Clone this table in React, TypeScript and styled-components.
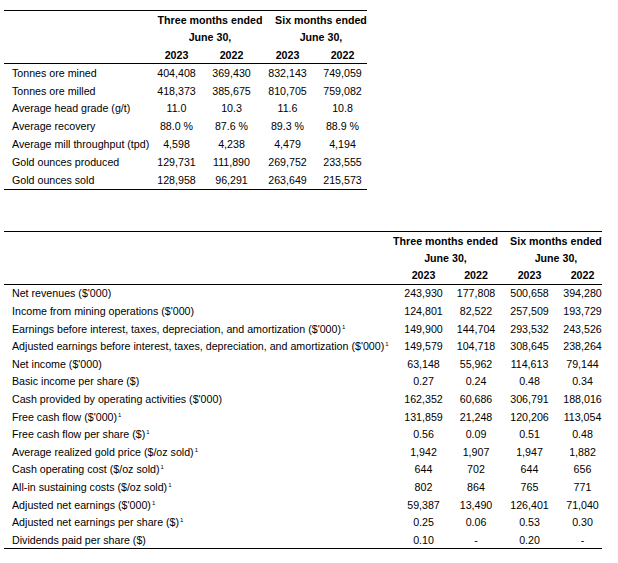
import React from "react";
import styled, { createGlobalStyle } from "styled-components";

const GlobalStyle = createGlobalStyle`
  html, body { margin: 0; padding: 0; background: #fff; }
  body {
    font-family: "Liberation Sans", Arial, sans-serif;
    font-size: 10.67px;
    color: #000;
  }
`;

const Page = styled.div`
  display: flex;
  flex-direction: column;
  align-items: flex-start;
  gap: 41px;
  padding: 10px 0 0 4px;
`;

const Table = styled.div<{ $width: number }>`
  display: flex;
  flex-direction: column;
  width: ${(p) => p.$width}px;
  border-top: 1px solid #000;
  border-bottom: 1px solid #000;
`;

const Head = styled.div<{ $cols: string; $rowH: number; $pad: number }>`
  display: grid;
  grid-template-columns: ${(p) => p.$cols};
  grid-auto-rows: ${(p) => p.$rowH}px;
  padding-top: ${(p) => p.$pad}px;
  border-bottom: 1px solid #000;
  font-weight: bold;
`;

const Blank = styled.div`
  grid-row: span 3;
`;

const Group = styled.div<{ $shift: number; $lh: number }>`
  grid-row: span 2;
  grid-column: span 2;
  display: flex;
  flex-direction: column;
  align-items: center;
  line-height: ${(p) => p.$lh}px;
  white-space: nowrap;
  padding-left: ${(p) => (p.$shift > 0 ? p.$shift * 2 : 0)}px;
  padding-right: ${(p) => (p.$shift < 0 ? -p.$shift * 2 : 0)}px;
`;

const Year = styled.div<{ $shift?: number }>`
  display: flex;
  align-items: center;
  justify-content: center;
  padding-left: ${(p) => (p.$shift ?? 0) * 2}px;
`;

const Body = styled.div<{ $cols: string; $rowH: number }>`
  display: grid;
  grid-template-columns: ${(p) => p.$cols};
  grid-auto-rows: ${(p) => p.$rowH}px;
`;

const Label = styled.div`
  display: flex;
  align-items: center;
  padding-left: 8px;
  white-space: nowrap;
`;

const Value = styled.div<{ $shift?: number }>`
  display: flex;
  align-items: center;
  justify-content: center;
  white-space: nowrap;
  padding-left: ${(p) => (p.$shift ?? 0) * 2}px;
`;

const Sup = styled.sup`
  font-size: 6px;
  line-height: 0;
  vertical-align: 4px;
  margin-left: 1px;
`;

type Row = { label: string; note?: boolean; values: string[] };

const ops: Row[] = [
  { label: "Tonnes ore mined", values: ["404,408", "369,430", "832,143", "749,059"] },
  { label: "Tonnes ore milled", values: ["418,373", "385,675", "810,705", "759,082"] },
  { label: "Average head grade (g/t)", values: ["11.0", "10.3", "11.6", "10.8"] },
  { label: "Average recovery", values: ["88.0 %", "87.6 %", "89.3 %", "88.9 %"] },
  { label: "Average mill throughput (tpd)", values: ["4,598", "4,238", "4,479", "4,194"] },
  { label: "Gold ounces produced", values: ["129,731", "111,890", "269,752", "233,555"] },
  { label: "Gold ounces sold", values: ["128,958", "96,291", "263,649", "215,573"] },
];

const fin: Row[] = [
  { label: "Net revenues ($'000)", values: ["243,930", "177,808", "500,658", "394,280"] },
  { label: "Income from mining operations ($'000)", values: ["124,801", "82,522", "257,509", "193,729"] },
  {
    label: "Earnings before interest, taxes, depreciation, and amortization ($'000)",
    note: true,
    values: ["149,900", "144,704", "293,532", "243,526"],
  },
  {
    label: "Adjusted earnings before interest, taxes, depreciation, and amortization ($'000)",
    note: true,
    values: ["149,579", "104,718", "308,645", "238,264"],
  },
  { label: "Net income ($'000)", values: ["63,148", "55,962", "114,613", "79,144"] },
  { label: "Basic income per share ($)", values: ["0.27", "0.24", "0.48", "0.34"] },
  { label: "Cash provided by operating activities ($'000)", values: ["162,352", "60,686", "306,791", "188,016"] },
  { label: "Free cash flow ($'000)", note: true, values: ["131,859", "21,248", "120,206", "113,054"] },
  { label: "Free cash flow per share ($)", note: true, values: ["0.56", "0.09", "0.51", "0.48"] },
  { label: "Average realized gold price ($/oz sold)", note: true, values: ["1,942", "1,907", "1,947", "1,882"] },
  { label: "Cash operating cost ($/oz sold)", note: true, values: ["644", "702", "644", "656"] },
  { label: "All-in sustaining costs ($/oz sold)", note: true, values: ["802", "864", "765", "771"] },
  { label: "Adjusted net earnings ($'000)", note: true, values: ["59,387", "13,490", "126,401", "71,040"] },
  { label: "Adjusted net earnings per share ($)", note: true, values: ["0.25", "0.06", "0.53", "0.30"] },
  { label: "Dividends paid per share ($)", values: ["0.10", "-", "0.20", "-"] },
];

type Spec = {
  width: number;
  cols: string;
  headPad: number;
  headRow: number;
  bodyRow: number;
  groupShift: [number, number];
  lastShift: number;
  rows: Row[];
};

const DataTable = ({ spec }: { spec: Spec }) => (
  <Table $width={spec.width}>
    <Head $cols={spec.cols} $rowH={spec.headRow} $pad={spec.headPad}>
      <Blank />
      <Group $shift={spec.groupShift[0]} $lh={spec.headRow}>
        <span>Three months ended</span>
        <span>June 30,</span>
      </Group>
      <Group $shift={spec.groupShift[1]} $lh={spec.headRow}>
        <span>Six months ended</span>
        <span>June 30,</span>
      </Group>
      <Year>2023</Year>
      <Year>2022</Year>
      <Year>2023</Year>
      <Year $shift={spec.lastShift}>2022</Year>
    </Head>
    <Body $cols={spec.cols} $rowH={spec.bodyRow}>
      {spec.rows.map((r) => (
        <React.Fragment key={r.label}>
          <Label>
            <span>
              {r.label}
              {r.note && <Sup>1</Sup>}
            </span>
          </Label>
          {r.values.map((v, i) => (
            <Value key={i} $shift={i === 3 ? spec.lastShift : 0}>
              {v}
            </Value>
          ))}
        </React.Fragment>
      ))}
    </Body>
  </Table>
);

const opsSpec: Spec = {
  width: 363,
  cols: "145px 55px 55px 57px 51px",
  headPad: 1,
  headRow: 17,
  bodyRow: 17.8,
  groupShift: [6, 8],
  lastShift: 1,
  rows: ops,
};

const finSpec: Spec = {
  width: 598,
  cols: "393px 53px 52px 55px 45px",
  headPad: 1,
  headRow: 17,
  bodyRow: 17.6,
  groupShift: [-4, 4],
  lastShift: 3,
  rows: fin,
};

export default function App() {
  return (
    <>
      <GlobalStyle />
      <Page>
        <DataTable spec={opsSpec} />
        <DataTable spec={finSpec} />
      </Page>
    </>
  );
}
